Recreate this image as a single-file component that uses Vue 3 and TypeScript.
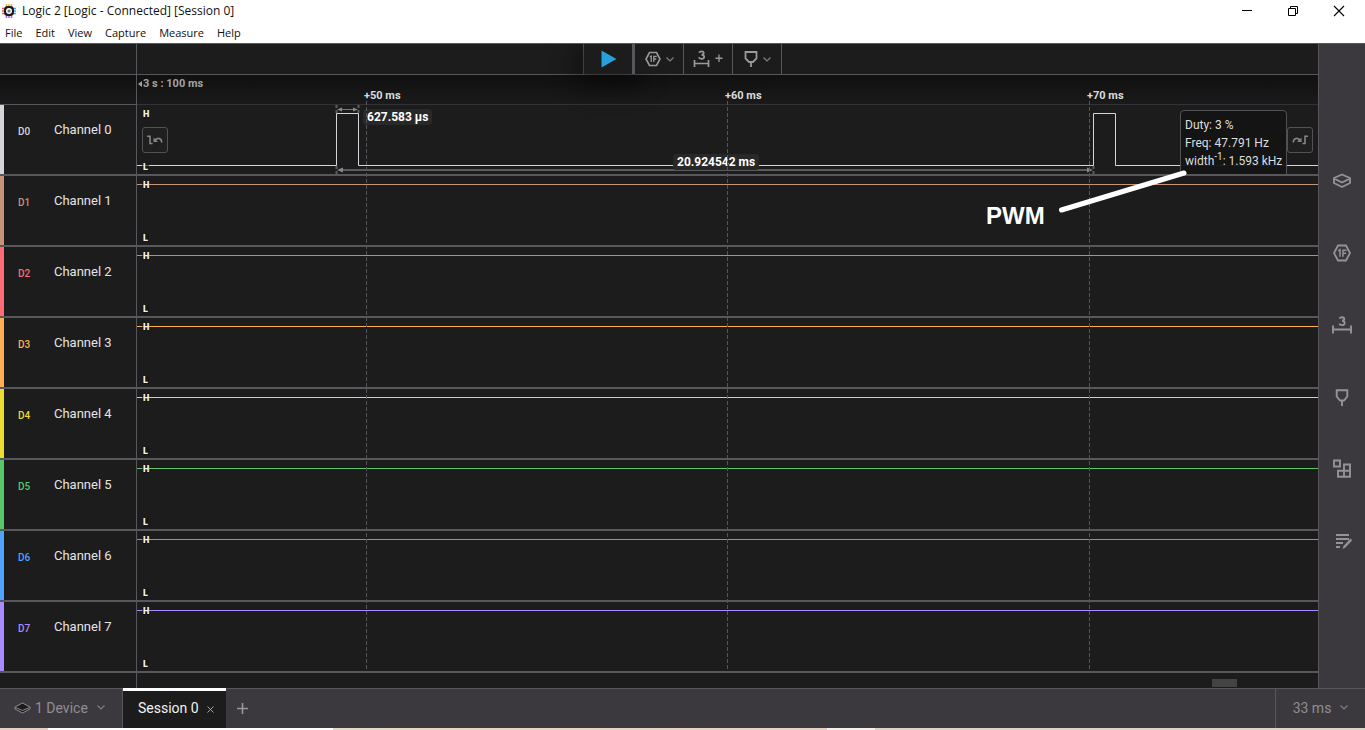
<script setup lang="ts">
interface Channel {
  id: string
  name: string
  color: string
  path: string
}

interface Tick {
  label: string
  x: number
}

const menus: string[] = ['File', 'Edit', 'View', 'Capture', 'Measure', 'Help']

const steadyHigh = 'M0 8.5H4000'
const pulses = 'M0 60.5H199.5V8.5H221.5V60.5H956.5V8.5H978.5V60.5H4000'

const colors: string[] = ['#d4d5d8', '#c9937a', '#ff6b74', '#ffae52', '#eddc33', '#57c76c', '#4fa3ff', '#a98bff']

const channels: Channel[] = colors.map((color, i) => ({
  id: `D${i}`,
  name: `Channel ${i}`,
  color,
  path: i === 0 ? pulses : steadyHigh,
}))

const ticks: Tick[] = [
  { label: '+50 ms', x: 229 },
  { label: '+60 ms', x: 590 },
  { label: '+70 ms', x: 952 },
]

const tools: string[] = ['Device', 'Analyzers', 'Measurements', 'Markers', 'Extensions', 'Notes']
</script>

<template>
  <div class="app">
    <header class="titlebar">
      <svg class="logo" width="14" height="14" viewBox="0 0 14 14">
        <g stroke-width="1.6">
          <path d="M4.500 0v3M7 0v3M9.500 0v3" stroke="#f2b63c" />
          <path d="M4.500 11v3M7 11v3M9.500 11v3" stroke="#a66be8" />
          <path d="M0 4.500h3M0 7h3M0 9.500h3" stroke="#ec5a4c" />
          <path d="M11 4.500h3M11 7h3M11 9.500h3" stroke="#4aa3ea" />
        </g>
        <rect x="2" y="2" width="10" height="10" rx="4" fill="#1b1b1f" />
        <circle cx="7" cy="7" r="2.300" fill="#77777c" stroke="#fff" stroke-width="1.400" />
      </svg>
      <span class="title">Logic 2 [Logic - Connected] [Session 0]</span>
      <div class="window-controls">
        <button type="button" aria-label="Minimize">
          <svg width="12" height="12" viewBox="0 0 12 12"><path d="M1 5.500h10" stroke="#000" /></svg>
        </button>
        <button type="button" aria-label="Restore">
          <svg width="12" height="12" viewBox="0 0 12 12" fill="none" stroke="#000">
            <path d="M1.500 3.500h7v7h-7zM3.500 3.500v-2h7v7h-2" />
          </svg>
        </button>
        <button type="button" aria-label="Close">
          <svg width="12" height="12" viewBox="0 0 12 12"><path d="M1 1l10 10M11 1L1 11" stroke="#000" stroke-width="1.100" /></svg>
        </button>
      </div>
    </header>
    <nav class="menubar">
      <button v-for="m in menus" :key="m" type="button">{{ m }}</button>
    </nav>

    <main class="workspace">
      <div class="head-left"></div>
      <div class="head-right"></div>
      <div class="ruler-left"></div>
      <div class="ruler">
        <span class="origin">
          <svg width="4" height="6" viewBox="0 0 4 6"><path d="M4 0v6L0 3z" fill="#a3a3a3" /></svg>
          3 s : 100 ms
        </span>
        <span v-for="t in ticks" :key="t.label" class="tick" :style="{ left: t.x - 2 + 'px' }">{{ t.label }}</span>
      </div>

      <div class="toolbar">
        <button class="play" type="button" aria-label="Start capture">
          <svg width="16" height="18" viewBox="0 0 16 18"><path d="M0.500 0.500L15.500 9L0.500 17.500z" fill="#28a0dc" /></svg>
        </button>
        <button type="button" aria-label="Trigger">
          <svg width="16" height="16" viewBox="0 0 16 16" fill="none" stroke="currentColor" stroke-width="1.600">
            <path d="M4.500 1.500h7L15 8l-3.500 6.500h-7L1 8z" />
            <path d="M4.800 5.800l1.400-.8v6M8.800 11V5.300h3M8.800 8h2.500" stroke-width="1.300" />
          </svg>
          <svg class="chev" width="8" height="5" viewBox="0 0 8 5" fill="none" stroke="currentColor" stroke-width="1.200"><path d="M.5.5L4 4L7.500.5" /></svg>
        </button>
        <button class="measure-tool" type="button" aria-label="Add measurement">
          <svg width="17" height="18" viewBox="0 0 17 18" fill="none" stroke="currentColor" stroke-width="1.700">
            <path d="M1.500 10v7M15.500 10v7M1.500 13.500h14" />
            <path d="M6 2.700c.5-1 1.300-1.300 2.500-1.300 3 0 3 3.400 0 3.400 3.600 0 3.600 4.100 0 4.100-1.500 0-2.300-.5-2.700-1.600" />
          </svg>
          <svg width="8" height="12" viewBox="0 0 8 12" stroke="currentColor" stroke-width="1.300"><path d="M4 1.500v7.500M.5 5.250h7" /></svg>
        </button>
        <button type="button" aria-label="Add marker">
          <svg width="14" height="16" viewBox="0 0 14 16" fill="none" stroke="currentColor" stroke-width="1.800">
            <path d="M1.500 1h11v6.500L9 11H5L1.500 7.500zM7 11v5" />
          </svg>
          <svg class="chev" width="8" height="5" viewBox="0 0 8 5" fill="none" stroke="currentColor" stroke-width="1.200"><path d="M.5.5L4 4L7.500.5" /></svg>
        </button>
      </div>

      <section class="channels">
        <div v-for="(c, i) in channels" :key="c.id" class="channel">
          <div class="label" :style="{ borderLeftColor: c.color }">
            <span class="cid" :style="{ color: c.color }">{{ c.id }}</span>
            <span class="cname">{{ c.name }}</span>
          </div>
          <div class="plot">
            <svg class="signal" width="100%" height="69">
              <template v-if="i === 0">
                <g stroke="#5c5c5f" stroke-dasharray="3 2">
                  <path d="M199.500 0v8M221.500 0v8M199.500 61v8M956.500 61v8" stroke-width="2" />
                </g>
                <path d="M203 4.500h16" stroke="#777" />
                <path d="M200 4.500l5-2v4zM221 4.500l-5-2v4z" fill="#888" />
                <path d="M204 65h748" stroke="#5c5c5e" stroke-width="2" />
                <path d="M200 65l6-2.500v5zM956 65l-6-2.500v5z" fill="#888" />
              </template>
              <path :d="c.path" fill="none" :stroke="c.color" />
            </svg>
            <span class="level high">H</span>
            <span class="level low">L</span>
            <template v-if="i === 0">
              <button class="jump prev" type="button" aria-label="Previous edge">
                <svg width="16" height="10" viewBox="0 0 16 10" fill="none" stroke="currentColor" stroke-width="1.600">
                  <path d="M0 1.200h3v7.300h2.500" />
                  <path d="M14.700 7.500c0-4.500-5-5.500-6.700-1.800" />
                  <path d="M6.500 2.500v4.500h4.500z" fill="currentColor" stroke="none" />
                </svg>
              </button>
              <button class="jump next" type="button" aria-label="Next edge">
                <svg width="16" height="10" viewBox="0 0 16 10" fill="none" stroke="currentColor" stroke-width="1.600">
                  <path d="M16 1.200h-3v7.300h-2.500" />
                  <path d="M1.300 7.500c0-4.500 5-5.500 6.700-1.800" />
                  <path d="M9.500 2.500v4.500H5z" fill="currentColor" stroke="none" />
                </svg>
              </button>
              <span class="measure width">627.583 µs</span>
              <span class="measure period">20.924542 ms</span>
              <div class="tooltip">
                <div>Duty: 3 %</div>
                <div>Freq: 47.791 Hz</div>
                <div>width<sup>-1</sup>: 1.593 kHz</div>
              </div>
            </template>
          </div>
        </div>
        <div class="scroll-row">
          <div class="scroll-left"></div>
          <div class="scroll-track"><div class="thumb"></div></div>
        </div>
      </section>

      <svg class="gridlines" width="100%" height="598">
        <path v-for="t in ticks" :key="t.label" :d="`M${t.x + 0.5} 26V597`" stroke="#56565a" stroke-dasharray="4 2" />
      </svg>

      <div class="note">
        <span>PWM</span>
        <svg width="130" height="46" viewBox="0 0 130 46"><path d="M3.500 41L126 4" stroke="#fff" stroke-width="5" stroke-linecap="round" /></svg>
      </div>

      <aside class="sidebar">
        <button v-for="(t, i) in tools" :key="t" type="button" :aria-label="t">
          <svg v-if="i === 0" width="20" height="16" viewBox="0 0 20 16" fill="none" stroke="currentColor" stroke-width="1.900">
            <path d="M10 1.500L18 5L18 10L10 14L2 10V5zM2 5.500L10 9.500L18 5.500" stroke-linejoin="round" />
          </svg>
          <svg v-else-if="i === 1" width="18" height="18" viewBox="0 0 18 18" fill="none" stroke="currentColor" stroke-width="1.800">
            <path d="M5 1.500h8L17 9l-4 7.500H5L1 9z" />
            <path d="M5.300 6.800L7 5.700v7M10 12.700V6.300h3.500M10 9.300h3" stroke-width="1.500" />
          </svg>
          <svg v-else-if="i === 2" width="20" height="18" viewBox="0 0 20 18" fill="none" stroke="currentColor" stroke-width="1.900">
            <path d="M1 9.500v8M19 9.500v8M1 13.500h18" />
            <path d="M7.500 2.700c.4-1 1.200-1.400 2.500-1.400 3 0 3 3.500 0 3.500 3.500 0 3.500 4.300 0 4.300-1.500 0-2.400-.6-2.700-1.700" />
          </svg>
          <svg v-else-if="i === 3" width="14" height="17" viewBox="0 0 14 17" fill="none" stroke="currentColor" stroke-width="1.900">
            <path d="M1.700 1.300h10.600v6.200L9 11.500H5L1.700 7.500zM7 11.500V17" />
          </svg>
          <svg v-else-if="i === 4" width="20" height="20" viewBox="0 0 20 20" fill="none" stroke="currentColor" stroke-width="1.900">
            <path d="M2 1.500h6v6H2zM12 5.500h6v6.250h-6zM6 11.750h6v6H6zM12 11.750h6v6h-6z" />
          </svg>
          <svg v-else class="notes" width="18" height="17" viewBox="0 0 18 17" fill="none" stroke="currentColor" stroke-width="2">
            <path d="M1 2h13M1 6h13M1 10h7M1 14h4" />
            <path d="M7.500 16l1-3 7-7.500 1.700 1.700-6.700 7.300z" fill="currentColor" stroke="none" />
          </svg>
        </button>
      </aside>
    </main>

    <footer class="bottombar">
      <button class="device" type="button">
        <svg width="17" height="12" viewBox="0 0 17 12" stroke="#8f8f91" stroke-width="1">
          <path d="M1 5L8.500 1L16 5V7L8.500 11L1 7z" fill="#1c1c1c" stroke-linejoin="round" />
          <path d="M1.500 5.500L8.500 8.500L15.500 5.500" fill="none" />
        </svg>
        1 Device
        <svg class="chev" width="8" height="5" viewBox="0 0 8 5" fill="none" stroke="currentColor" stroke-width="1.200"><path d="M.5.5L4 4L7.500.5" /></svg>
      </button>
      <div class="tab">
        <button class="tab-name" type="button">Session 0</button>
        <button class="close" type="button" aria-label="Close session">
          <svg width="7" height="7" viewBox="0 0 7 7"><path d="M.5.5l6 6M6.500.5l-6 6" stroke="#a5a5a5" /></svg>
        </button>
      </div>
      <button class="add" type="button" aria-label="New session">
        <svg width="11" height="11" viewBox="0 0 11 11"><path d="M5.500 0v11M0 5.500h11" stroke="#98979a" stroke-width="1.600" /></svg>
      </button>
      <button class="duration" type="button">
        33 ms
        <svg class="chev" width="8" height="5" viewBox="0 0 8 5" fill="none" stroke="currentColor" stroke-width="1.200"><path d="M.5.5L4 4L7.500.5" /></svg>
      </button>
    </footer>
    <div class="desktop-edge"></div>
  </div>
</template>

<style>
body {
  margin: 0;
}
</style>

<style scoped>
.app {
  display: flex;
  flex-direction: column;
  min-height: 100vh;
  background: #1c1c1c;
  color: #e6e6e6;
  font-family: Roboto, "Liberation Sans", sans-serif;
  overflow: hidden;
}
button {
  display: flex;
  align-items: center;
  justify-content: center;
  margin: 0;
  padding: 0;
  border: 0;
  background: none;
  color: inherit;
  font: inherit;
}
svg {
  flex: none;
}
.titlebar,
.menubar {
  display: flex;
  align-items: center;
  background: #fff;
  color: #111;
  font-family: "Open Sans", "Noto Sans", sans-serif;
  font-size: 11px;
}
.titlebar {
  height: 22px;
  padding-left: 2px;
}
.title {
  margin-left: 6px;
  line-height: 22px;
  font-size: 12px;
}
.window-controls {
  display: flex;
  align-items: flex-start;
  margin-left: auto;
  padding-right: 3px;
}
.window-controls button {
  width: 46px;
  height: 20px;
}
.menubar {
  height: 21px;
  padding-left: 5px;
  gap: 13px;
  border-bottom: 1px solid #58575c;
}
.menubar button {
  line-height: 20px;
}
.workspace {
  display: grid;
  flex: 1;
  grid-template-columns: 137px minmax(0, 1fr) 47px;
  grid-template-rows: 31px 30px 1fr;
  position: relative;
}
.head-left,
.head-right {
  grid-row: 1;
  border-bottom: 1px solid #58575c;
}
.head-left,
.ruler-left {
  grid-column: 1;
  border-right: 1px solid #58575c;
}
.head-right {
  grid-column: 2;
}
.ruler-left,
.ruler {
  grid-row: 2;
  background: linear-gradient(#101010, #1a1a1a);
  border-bottom: 1px solid #58575c;
}
.ruler {
  grid-column: 2;
  position: relative;
  border-bottom-color: #333237;
  font-size: 11px;
  font-weight: 700;
  line-height: 14px;
}
.origin {
  position: absolute;
  left: 1px;
  top: 2px;
  display: flex;
  align-items: center;
  gap: 1px;
  color: #a3a3a3;
}
.tick {
  position: absolute;
  top: 14px;
  color: #dcdcdc;
}
.toolbar {
  grid-row: 1;
  grid-column: 1 / 4;
  justify-self: center;
  display: flex;
  height: 30px;
  border-left: 1px solid #58575c;
  background: #1c1c1c;
  color: #9a999c;
  z-index: 1;
  clip-path: inset(0 -60px -60px -60px);
}
.toolbar button {
  width: 49px;
  box-sizing: border-box;
  gap: 5px;
  border-right: 1px solid #58575c;
}
.toolbar .play {
  width: 51px;
  padding-left: 1px;
  border-right-width: 3px;
  box-shadow: 0 6px 26px 6px rgba(0, 0, 0, 0.45);
}
.toolbar button:not(.play) {
  position: relative;
  background: #1c1c1c;
}
.chev {
  opacity: 0.8;
}
.channels {
  grid-row: 3;
  grid-column: 1 / 3;
  display: flex;
  flex-direction: column;
}
.channel {
  display: flex;
  height: 69px;
  border-bottom: 2px solid #58575c;
}
.label {
  display: flex;
  align-items: flex-start;
  box-sizing: border-box;
  width: 137px;
  padding: 17px 0 0 14px;
  border-left: 4px solid;
  border-right: 1px solid #58575c;
  line-height: 16px;
}
.cid {
  width: 36px;
  padding-top: 2px;
  font-size: 10px;
  font-weight: 500;
}
.cname {
  font-size: 13px;
  color: #e4e4e4;
}
.plot {
  flex: 1;
  min-width: 0;
  position: relative;
  overflow: hidden;
}
.signal {
  display: block;
}
.level {
  position: absolute;
  left: 5px;
  width: 7px;
  box-sizing: border-box;
  padding-left: 1px;
  font-size: 9px;
  font-weight: 900;
  line-height: 8px;
  background: rgba(18, 18, 18, 0.6);
  color: #f0f0f0;
}
.high {
  top: 5px;
}
.low {
  top: 58px;
}
.jump {
  position: absolute;
  top: 22px;
  width: 26px;
  height: 26px;
  box-sizing: border-box;
  border: 1px solid #525156;
  border-radius: 3px;
  background: #1f1f20;
  color: #858487;
}
.prev {
  left: 5px;
}
.next {
  right: 5px;
}
.measure {
  position: absolute;
  padding: 0 4px;
  border-radius: 3px;
  background: #282828;
  color: #fff;
  font-size: 12px;
  font-weight: 700;
  line-height: 16px;
}
.width {
  left: 226px;
  top: 4px;
}
.period {
  left: 536px;
  top: 49px;
}
.tooltip {
  position: absolute;
  left: 1043px;
  top: 5px;
  height: 70px;
  box-sizing: border-box;
  padding: 5px 4px;
  border: 1px solid #525156;
  border-radius: 4px;
  background: rgba(20, 20, 20, 0.95);
  color: #dedede;
  font-size: 12px;
  line-height: 18px;
  white-space: nowrap;
}
.tooltip sup {
  font-size: 10px;
  line-height: 0;
}
.scroll-row {
  display: flex;
  flex: 1;
}
.scroll-left {
  box-sizing: border-box;
  width: 137px;
  border-right: 1px solid #58575c;
}
.scroll-track {
  display: flex;
  flex: 1;
  align-items: flex-end;
  justify-content: flex-end;
  padding: 0 81px 1px 0;
}
.thumb {
  width: 25px;
  height: 8px;
  background: #434343;
}
.gridlines {
  grid-row: 2 / 4;
  grid-column: 2;
  pointer-events: none;
  position: relative;
}
.note {
  position: absolute;
  left: 986px;
  top: 125px;
  display: flex;
  gap: 12px;
  align-items: flex-start;
  font-family: "Liberation Sans", Arial, sans-serif;
  font-size: 24px;
  font-weight: 700;
  line-height: 28px;
  color: #fff;
  pointer-events: none;
}
.note span {
  padding-top: 33px;
  width: 60px;
}
.sidebar {
  grid-row: 1 / 4;
  grid-column: 3;
  display: flex;
  flex-direction: column;
  padding-top: 101px;
  border-left: 1px solid #58575c;
  background: #3b393e;
  color: #949396;
}
.sidebar button {
  height: 72px;
}
.notes {
  margin-left: 4px;
}
.bottombar {
  display: flex;
  height: 40px;
  box-sizing: border-box;
  border-top: 1px solid #58575c;
  background: #3b393e;
  color: #8f8e91;
  font-size: 14px;
}
.device,
.duration {
  padding-bottom: 2px;
}
.device {
  width: 123px;
  box-sizing: border-box;
  justify-content: flex-start;
  padding-left: 14px;
  border-right: 1px solid #58575c;
  gap: 4px;
}
.device .chev,
.duration .chev {
  margin-left: 5px;
}
.tab {
  display: flex;
  align-items: center;
  box-sizing: border-box;
  width: 103px;
  padding-left: 15px;
  padding-bottom: 4px;
  gap: 8px;
  border-top: 2px solid #fff;
  box-shadow: 0 -1px #fff;
  background: #1c1c1c;
  color: #f2f2f2;
}
.close {
  padding-top: 4px;
}
.add {
  width: 32px;
}
.duration {
  margin-left: auto;
  width: 90px;
  box-sizing: border-box;
  gap: 4px;
  border-left: 1px solid #58575c;
}
.desktop-edge {
  height: 2px;
  background: linear-gradient(90deg, #e2cfc4 48px, #fff 48px, #fff 333px, #e0dcc8 333px, #e3d9bc 440px, #e2d2c4 827px, #f6f0ea 827px, #f6f0ea 875px, #ddd3c4 875px);
}
</style>
